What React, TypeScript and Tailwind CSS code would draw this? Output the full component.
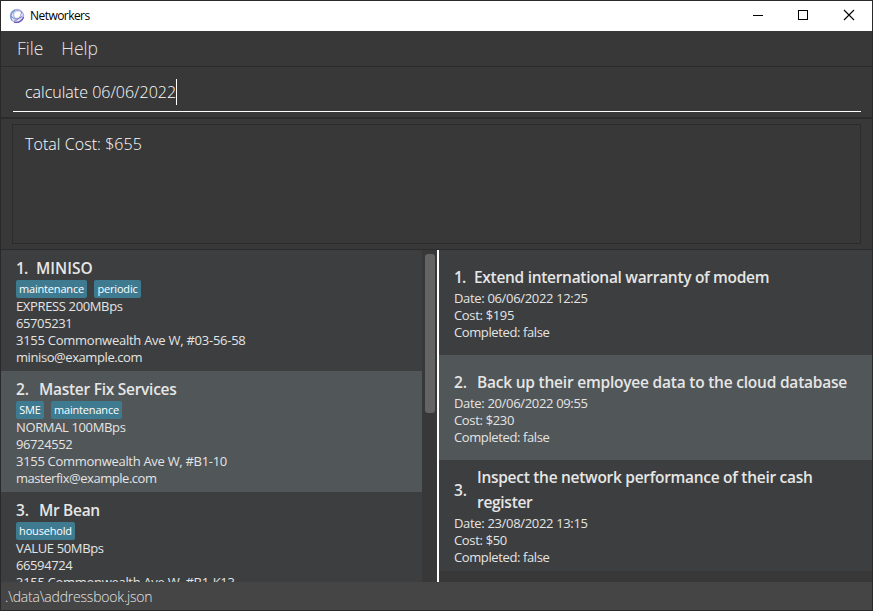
import React from 'react';

type Person = {
  name: string;
  nameClass: string;
  tags: { label: string; box: string }[];
  lines: { text: string; cls: string }[];
};

const people: Person[] = [
  {
    name: 'MINISO',
    nameClass: 'ml-[9px] tracking-[0px]',
    tags: [
      { label: 'maintenance', box: 'w-[71px]' },
      { label: 'periodic', box: 'w-[47px]' },
    ],
    lines: [
      { text: 'EXPRESS 200MBps', cls: 'tracking-[-0.36px]' },
      { text: '65705231', cls: 'tracking-[-0.4px]' },
      { text: '3155 Commonwealth Ave W, #03-56-58', cls: 'tracking-[-0.26px]' },
      { text: 'miniso@example.com', cls: 'tracking-[-0.42px]' },
    ],
  },
  {
    name: 'Master Fix Services',
    nameClass: 'ml-[10px] tracking-[-0.27px]',
    tags: [
      { label: 'SME', box: 'w-[28px]' },
      { label: 'maintenance', box: 'w-[71px]' },
    ],
    lines: [
      { text: 'NORMAL 100MBps', cls: 'tracking-[-0.36px]' },
      { text: '96724552', cls: 'tracking-[-0.4px]' },
      { text: '3155 Commonwealth Ave W, #B1-10', cls: 'tracking-[-0.3px]' },
      { text: 'masterfix@example.com', cls: 'tracking-[-0.46px]' },
    ],
  },
  {
    name: 'Mr Bean',
    nameClass: 'ml-[10px] tracking-[-0.3px]',
    tags: [{ label: 'household', box: 'w-[59px]' }],
    lines: [
      { text: 'VALUE 50MBps', cls: 'tracking-[-0.36px]' },
      { text: '66594724', cls: 'tracking-[-0.4px]' },
      { text: '3155 Commonwealth Ave W, #B1-K13', cls: 'tracking-[-0.3px]' },
    ],
  },
];

const jobs = [
  { title: ['Extend international warranty of modem'], date: '06/06/2022 12:25', cost: '$195', cls: 'ml-[9px] tracking-[-0.3px]' },
  { title: ['Back up their employee data to the cloud database'], date: '20/06/2022 09:55', cost: '$230', cls: 'ml-[10px] tracking-[-0.22px]' },
  { title: ['Inspect the network performance of their cash', 'register'], date: '23/08/2022 13:15', cost: '$50', cls: 'ml-[10px] tracking-[-0.29px]' },
];

function Logo() {
  return (
    <svg className="ml-[8px] h-4 w-4 shrink-0" viewBox="0 0 16 16" fill="none">
      <circle cx="8" cy="8" r="6.7" fill="#dfe3f4" stroke="#a3a9d8" strokeWidth="1" />
      <ellipse cx="9" cy="6.500" rx="3.800" ry="3" fill="#fff" />
      <path d="M3 12.500C1 9.500 1.500 4 6 2" stroke="#6a97cf" strokeWidth="1.100" />
      <path d="M5 14C9 15.500 13.500 13 14.500 9" stroke="#6a4fb0" strokeWidth="1.200" />
      <path d="M4 4.500C7 2 11 2 13.500 5" stroke="#8d9bd4" strokeWidth="0.900" />
      <path d="M2 8C4.500 11.500 9.500 12 13.500 8" stroke="#6d84c8" strokeWidth="1" />
      <path d="M5 13C9 12 12 9 12.500 4" stroke="#8a74c6" strokeWidth="0.900" />
      <path d="M5 3.500C4 7 5 11 9 14" stroke="#94a8da" strokeWidth="0.800" />
    </svg>
  );
}

function TitleBar() {
  return (
    <div className="flex h-[30px] shrink-0 items-center bg-white text-black">
      <Logo />
      <span className="ml-[5px] text-[12px] tracking-[-0.55px]">Networkers</span>
      <svg className="ml-auto h-[30px] w-[138px]" viewBox="0 0 138 30" fill="none" stroke="#000" shapeRendering="crispEdges">
        <path d="M19 14.500H29" />
        <rect x="64.500" y="9.500" width="9" height="9" />
        <path d="M110 9L120 19M120 9L110 19" shapeRendering="auto" strokeWidth="1.100" />
      </svg>
    </div>
  );
}

function RowNumber({ n }: { n: number }) {
  return <span className={n === 1 ? 'w-[11px] tracking-[-1px]' : 'w-[13px] tracking-[-0.2px]'}>{n}.</span>;
}

function PersonRow({ person, index }: { person: Person; index: number }) {
  return (
    <div className={`h-[121px] shrink-0 py-[5px] pl-[15px] ${index % 2 ? 'bg-[#515658]' : 'bg-[#3c3e3f]'}`}>
      <div className="flex h-[25px] items-center pt-[2px] text-[15.500px] font-semibold text-[#e6e6e6]">
        <RowNumber n={index + 1} />
        <span className={person.nameClass}>{person.name}</span>
      </div>
      <div className="flex gap-[7px]">
        {person.tags.map((t) => (
          <span key={t.label} className={`flex h-[18px] items-center justify-center rounded-[2px] bg-[#3e7b91] text-[11px] tracking-[-0.17px] text-white ${t.box}`}>
            {t.label}
          </span>
        ))}
      </div>
      {person.lines.map((l) => (
        <div key={l.text} className={`h-[17px] text-[13px] leading-[17px] ${l.cls}`}>{l.text}</div>
      ))}
    </div>
  );
}

export default function App() {
  return (
    <div className="flex h-[611px] w-[873px] flex-col overflow-hidden whitespace-nowrap border border-[#292929] bg-[#383838] font-['Open_Sans','Noto_Sans',sans-serif] text-[#e4e4e4]">
      <TitleBar />
      <div className="flex h-[35px] shrink-0 items-center pl-4 text-[17.500px] font-light">
        <span>File</span>
        <span className="ml-[18px]">Help</span>
      </div>
      <div className="h-[53px] shrink-0 border-t border-b-2 border-[#2b2b2b] pl-[12px] pr-[11px]">
        <div className="flex h-[45px] items-center border-b border-white pl-[12px] pt-[6px]">
          <span className="text-[16px] font-light text-white">calculate 06/06/2022</span>
          <span className="h-[26px] w-px bg-white" />
        </div>
      </div>
      <div className="h-[131px] shrink-0 border-b border-[#2b2b2b] px-[11px] pt-[5px]">
        <div className="h-[120px] border border-[#2b2b2b] pl-[12px] pt-[7px]">
          <div className="text-[16px] font-light leading-6 tracking-[0.060px] text-white">Total Cost: $655</div>
        </div>
      </div>
      <div className="flex h-[332px] shrink-0">
        <div className="flex w-[421px] flex-col overflow-hidden">
          {people.map((p, i) => (
            <PersonRow key={p.name} person={p} index={i} />
          ))}
        </div>
        <div className="w-[15px] pl-[3px] pt-[4px]">
          <div className="h-[159px] w-[10px] rounded-[3px] bg-[#646464]" />
        </div>
        <div className="w-[2px] bg-white" />
        <div className="flex flex-1 flex-col">
          {jobs.map((j, i) => (
            <div key={j.date} className={`flex min-h-[105px] flex-col justify-center py-[5px] pl-[15px] ${i % 2 ? 'bg-[#515658]' : 'bg-[#3c3e3f]'}`}>
              <div className="flex items-center text-[15.500px] font-semibold leading-[25px] text-[#e6e6e6]">
                <RowNumber n={i + 1} />
                <span className={j.cls}>
                  {j.title.map((t) => (
                    <span key={t} className="block">{t}</span>
                  ))}
                </span>
              </div>
              <div className="text-[13px] leading-[17px] tracking-[-0.33px]">
                <div>Date: {j.date}</div>
                <div>Cost: {j.cost}</div>
                <div className="tracking-[-0.39px]">Completed: false</div>
              </div>
            </div>
          ))}
        </div>
      </div>
      <div className="flex flex-1 items-center bg-[#454545] pl-[4px] text-[14px] font-light tracking-[-0.2px]">.\data\addressbook.json</div>
    </div>
  );
}
